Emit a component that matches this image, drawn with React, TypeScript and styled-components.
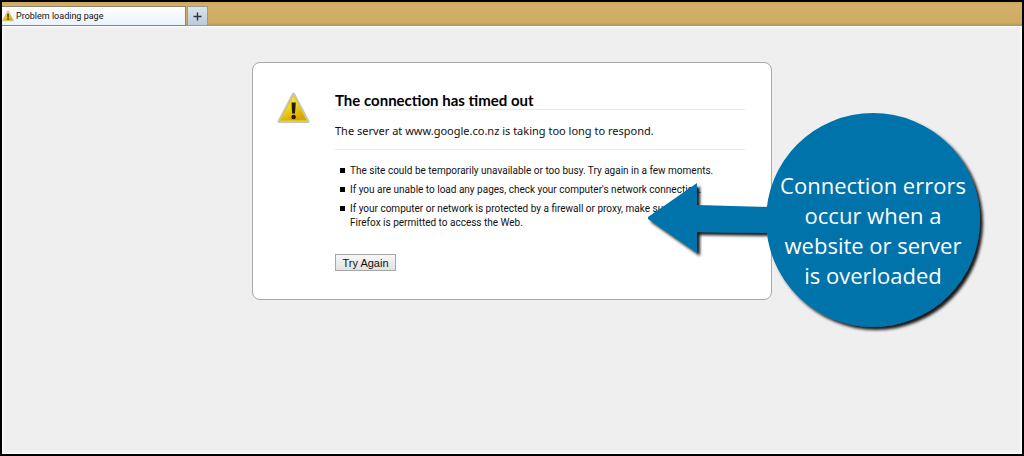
import React from "react";
import styled, { createGlobalStyle } from "styled-components";

const GlobalStyle = createGlobalStyle`
  * { box-sizing: border-box; }
  body { margin: 0; background: #efefef; font-family: "Open Sans", "Noto Sans", sans-serif; color: #000; }
`;

const Window = styled.div`
  display: flex;
  flex-direction: column;
  min-height: 100vh;
  border: 2px solid #000;
  background: #efefef;
  overflow: hidden;
`;

const TabBar = styled.header`
  display: flex;
  align-items: stretch;
  gap: 1px;
  height: 24px;
  padding-top: 4px;
  background: linear-gradient(#c9a75c 0, #d3b067 3px, #cdac62 21px, #a99468 24px);
`;

const Tab = styled.button`
  display: flex;
  align-items: center;
  gap: 2px;
  width: 184px;
  padding: 0;
  border: 1px solid #8f8568;
  border-width: 1px 1px 1px 0;
  background: linear-gradient(#ffffff, #eaf3fc);
  font: 9px/14px Roboto, sans-serif;
  color: #111;
  text-align: left;
`;

const NewTab = styled.button`
  display: flex;
  align-items: center;
  justify-content: center;
  width: 21px;
  padding: 0;
  border: 1px solid #9c9a8c;
  background: linear-gradient(#dbe4ee, #bccadb);
`;

const Page = styled.main`
  flex: 1;
  padding: 35px 24px;
  border: 1px solid #fdfdfd;
  box-shadow: inset 0 0 0 2px #f3f3f3;
`;

const Card = styled.section`
  position: relative;
  display: flex;
  gap: 25px;
  width: 520px;
  margin: 0 auto;
  padding: 28px 26px 28px 24px;
  border: 1px solid #a9a9a9;
  border-radius: 8px;
  background: #fff;
`;

const WarningSlot = styled.div`
  flex: none;
  width: 33px;
  padding-top: 1px;
`;

const Message = styled.div`
  flex: 1;
`;

const Title = styled.h1`
  margin: 0;
  border-bottom: 1px solid #e9e9e9;
  font: 700 15px/18px Lato, sans-serif;
`;

const Summary = styled.p`
  margin: 0;
  padding: 12px 0 9px;
  border-bottom: 1px solid #e9e9e9;
  font: 11px/18px "Noto Sans", sans-serif;
  color: #111;
`;

const Hints = styled.ul`
  display: flex;
  flex-direction: column;
  gap: 5px;
  margin: 0;
  padding: 14px 0 24px;
  list-style: none;
  font: 10px/14px Roboto, sans-serif;
  color: #111;
`;

const Hint = styled.li`
  display: flex;
  gap: 5px;
  padding-left: 5px;
  white-space: nowrap;

  &::before {
    content: "";
    flex: none;
    width: 5px;
    height: 5px;
    margin-top: 4px;
    background: #000;
  }
`;

const RetryButton = styled.button`
  display: block;
  height: 17px;
  width: 61px;
  padding: 0;
  border: 1px solid #a6a6a6;
  background: linear-gradient(#f7f7f7, #e2e2e2);
  font: 11px/14px "Liberation Sans", sans-serif;
  color: #111;
`;

const Callout = styled.aside`
  position: absolute;
  top: 49px;
  left: 393px;
  width: 340px;
  height: 220px;
`;

const CalloutShape = styled.svg`
  display: block;
  overflow: visible;
`;

const CalloutText = styled.p`
  position: absolute;
  top: 58px;
  left: 119px;
  width: 216px;
  margin: 0;
  font: 22px/30px "Open Sans", sans-serif;
  color: #fff;
  text-align: center;
`;

function Warning({ size, id }: { size: number; id: string }) {
  return (
    <svg width={size} height={size} viewBox="0 0 33 33" aria-hidden="true">
      <defs>
        <linearGradient id={id} x1="0" y1="0" x2="0.5" y2="1">
          <stop offset="0" stopColor="#f4ec62" />
          <stop offset="0.5" stopColor="#f3d91c" />
          <stop offset="1" stopColor="#d9a404" />
        </linearGradient>
      </defs>
      <path d="M16.5 2 31 29.5H2Z" fill="#bbb" stroke="#c4c4c0" strokeWidth="3" strokeLinejoin="round" />
      <path d="M16.5 3.5 30 28.5H3Z" fill={`url(#${id})`} stroke="#e5c51c" strokeWidth="1" strokeLinejoin="round" />
      <path d="M14.5 10.5h4.2l-.7 11h-2.8Z" fill="#1d1a08" />
      <circle cx="16.6" cy="25" r="2.2" fill="#1d1a08" />
    </svg>
  );
}

export default function App() {
  return (
    <>
      <GlobalStyle />
      <Window>
        <TabBar>
          <Tab type="button">
            <Warning size={12} id="tab-warning" />
            Problem loading page
          </Tab>
          <NewTab type="button" aria-label="New tab">
            <svg width="9" height="9" viewBox="0 0 9 9" aria-hidden="true">
              <path d="M4.5 0.5v8M0.5 4.5h8" stroke="#2b3640" strokeWidth="1.4" />
            </svg>
          </NewTab>
        </TabBar>
        <Page>
          <Card>
            <WarningSlot>
              <Warning size={33} id="page-warning" />
            </WarningSlot>
            <Message>
              <Title>The connection has timed out</Title>
              <Summary>The server at www.google.co.nz is taking too long to respond.</Summary>
              <Hints>
                <Hint>The site could be temporarily unavailable or too busy. Try again in a few moments.</Hint>
                <Hint>If you are unable to load any pages, check your computer's network connection.</Hint>
                <Hint>
                  <span>
                    If your computer or network is protected by a firewall or proxy, make sure that
                    <br />
                    Firefox is permitted to access the Web.
                  </span>
                </Hint>
              </Hints>
              <RetryButton type="button">Try Again</RetryButton>
            </Message>
            <Callout>
              <CalloutShape width="340" height="220" viewBox="0 0 340 220" aria-hidden="true">
                <defs>
                  <filter id="callout-shadow" x="-5%" y="-5%" width="112%" height="112%">
                    <feDropShadow dx="3" dy="3" stdDeviation="1.5" floodColor="#000" floodOpacity="0.9" />
                  </filter>
                </defs>
                <g fill="#0273ab" filter="url(#callout-shadow)">
                  <path d="M2 105 51 71v22l74 2v26l-74-1v21L2 107Z" />
                  <circle cx="227" cy="108" r="107" />
                </g>
              </CalloutShape>
              <CalloutText>
                Connection errors
                <br />
                occur when a
                <br />
                website or server
                <br />
                is overloaded
              </CalloutText>
            </Callout>
          </Card>
        </Page>
      </Window>
    </>
  );
}
